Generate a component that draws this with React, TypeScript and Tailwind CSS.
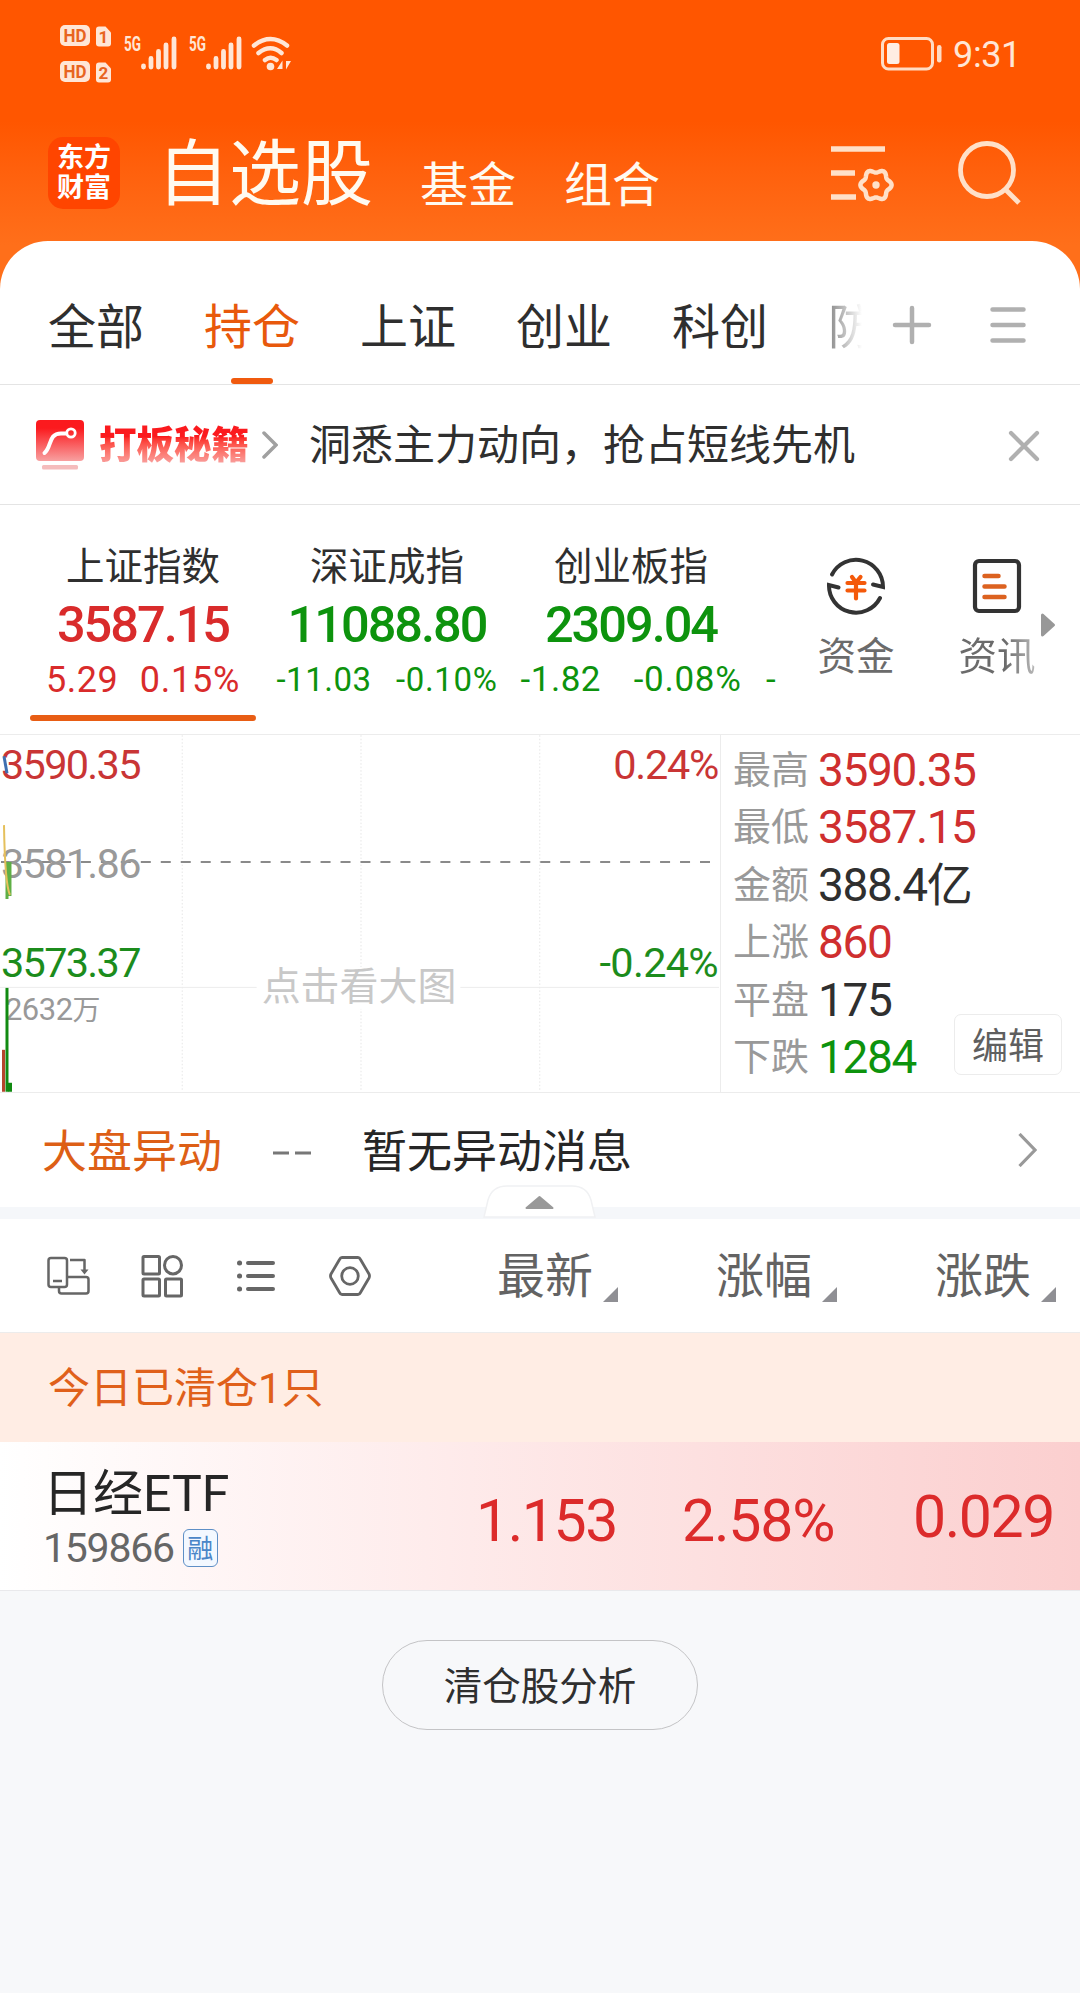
const tabs = ["全部", "持仓", "上证", "创业", "科创", "防"];

const indexes = [
  {
    name: "上证指数",
    price: "3587.15",
    change: "5.29",
    percent: "0.15%",
    color: "text-[#d92b2b]",
    row: "w-[194px] text-[36px]",
    active: true,
  },
  {
    name: "深证成指",
    price: "11088.80",
    change: "-11.03",
    percent: "-0.10%",
    color: "text-[#0d930d]",
    row: "w-[221px] text-[33px]",
    active: false,
  },
  {
    name: "创业板指",
    price: "2309.04",
    change: "-1.82",
    percent: "-0.08%",
    color: "text-[#0d930d]",
    row: "w-[221px] text-[35px]",
    active: false,
  },
];

const stats = [
  { label: "最高", value: "3590.35", color: "text-[#cf2f2f]" },
  { label: "最低", value: "3587.15", color: "text-[#cf2f2f]" },
  { label: "金额", value: "388.4亿", color: "text-[#2f2f2f]" },
  { label: "上涨", value: "860", color: "text-[#cf2f2f]" },
  { label: "平盘", value: "175", color: "text-[#2f2f2f]" },
  { label: "下跌", value: "1284", color: "text-[#0d930d]" },
];

// wavy six-lobed outline used by the settings icon
const gearPath =
  Array.from({ length: 72 }, (_, i) => {
    const t = (i / 72) * Math.PI * 2;
    const r = 14 + 1.6 * Math.cos(6 * t);
    const x = (45 + r * Math.cos(t)).toFixed(2);
    const y = (39 + r * Math.sin(t)).toFixed(2);
    return `${i === 0 ? "M" : "L"}${x} ${y}`;
  }).join(" ") + "Z";

function HdBadge({ sim }: { sim: string }) {
  return (
    <svg width="52" height="22" viewBox="0 0 52 22">
      <rect x="0" y="0" width="30" height="21" rx="5" fill="#ffe6d6" />
      <text x="3.5" y="17" fontSize="18" fontWeight="700" fill="#e8641f" textLength="23" lengthAdjust="spacingAndGlyphs">
        HD
      </text>
      <path d="M39 1.5h6.5l5.5 6v11a3 3 0 0 1-3 3h-9a3 3 0 0 1-3-3v-14a3 3 0 0 1 3-3z" fill="#ffe6d6" />
      <text x="43.5" y="18" fontSize="17" fontWeight="700" fill="#e8641f" textAnchor="middle">
        {sim}
      </text>
    </svg>
  );
}

function Signal() {
  return (
    <svg className="overflow-visible" width="53" height="35" viewBox="0 0 53 35">
      <text x="0" y="15" fontSize="21" fontWeight="700" fill="#ffe6d6" textLength="17" lengthAdjust="spacingAndGlyphs">
        5G
      </text>
      <path d="M19.5 30v1M27 22.500v8.500M34.500 15.500v15.500M42 9v22M50 3v28" stroke="#ffe6d6" strokeWidth="4.800" strokeLinecap="round" />
    </svg>
  );
}

function StatusBar() {
  return (
    <div className="flex h-[106px] items-center pl-[60px] pr-[59px]">
      <div className="flex flex-col gap-[14px] pt-[1px]">
        <HdBadge sim="1" />
        <HdBadge sim="2" />
      </div>
      <div className="ml-[12px] flex gap-[12px]">
        <Signal />
        <Signal />
      </div>
      <svg className="ml-[9px]" width="42" height="35" viewBox="0 0 42 35" fill="none" stroke="#ffe6d6" strokeWidth="4.500" strokeLinecap="round">
        <path d="M3 9.500Q19.500-3.500 36 9.500M7.500 17Q19.500 7.500 30.500 17M14 24Q19.500 19.500 25.500 24" />
        <circle cx="19.500" cy="30.500" r="3.800" fill="#ffe6d6" stroke="none" />
        <path d="M31.500 24.500v8.500h-5.500zM35 33.500v-8.500h5z" fill="#ffe6d6" stroke="none" />
      </svg>
      <svg className="ml-auto mt-[1px]" width="61" height="34" viewBox="0 0 61 34">
        <rect x="1.500" y="1.500" width="50" height="30.500" rx="6" fill="none" stroke="#ffdcc4" strokeWidth="3" />
        <rect x="6" y="6" width="12.500" height="21" rx="2.500" fill="#ffede2" />
        <rect x="56" y="8" width="4.500" height="17.500" rx="2.200" fill="#ffdcc4" />
      </svg>
      <span className="ml-[11px] pt-[4px] text-[36px] leading-none tracking-[-0.01em] text-[#ffe6d6]">9:31</span>
    </div>
  );
}

function Header() {
  return (
    <header className="h-[289px] bg-gradient-to-b from-[#ff5600] from-[42%] to-[#ff6f1a] to-[85%]">
      <StatusBar />
      <div className="flex h-[134px] items-center pl-[48px] pr-[58px] text-[#fffaf0]">
        <div className="flex size-[72px] flex-col items-center justify-center rounded-[15px] bg-[#ff4500] text-[27px] font-bold leading-[30px] text-white">
          <span>东方</span>
          <span>财富</span>
        </div>
        <h1 className="ml-[37px] pt-[3px] text-[72px] leading-none">自选股</h1>
        <span className="ml-[47px] pt-[26px] text-[48px] leading-none">基金</span>
        <span className="ml-[48px] pt-[26px] text-[48px] leading-none">组合</span>
        <svg className="ml-auto mt-[5px]" width="64" height="60" viewBox="0 0 64 60" fill="none" stroke="#ffe0c8">
          <path d="M0 3h54M0 27h24M0 51h25" strokeWidth="5.500" />
          <path d={gearPath} strokeWidth="4.500" strokeLinejoin="round" />
          <circle cx="45" cy="39" r="3.700" fill="#ffe0c8" stroke="none" />
        </svg>
        <svg className="ml-[63px]" width="64" height="64" viewBox="0 0 64 64" fill="none" stroke="#ffe0c8" strokeWidth="4.800">
          <ellipse cx="29" cy="29" rx="26.500" ry="26.500" />
          <path d="M47 48l14 14" strokeWidth="5" />
        </svg>
      </div>
    </header>
  );
}

function Tabs() {
  return (
    <nav className="flex h-[144px] border-b border-[#e4e4e4]">
      <div className="flex w-[868px] gap-[60px] overflow-hidden pl-[48px]">
        {tabs.map((tab) => (
          <div
            key={tab}
            className={
              tab === "持仓"
                ? "flex shrink-0 flex-col items-center pt-[63px] text-[48px] leading-none text-[#e8590c]"
                : tab === "防"
                  ? "w-[34px] shrink-0 overflow-hidden bg-gradient-to-r from-[#888] to-[#fff] bg-clip-text pt-[63px] text-[48px] leading-none text-transparent"
                  : "shrink-0 pt-[63px] text-[48px] leading-none text-[#2f2f2f]"
            }
          >
            {tab}
            {tab === "持仓" && <div className="mt-[26px] h-[6px] w-[42px] rounded-full bg-[#f05a0e]" />}
          </div>
        ))}
      </div>
      <svg className="ml-[24px] mt-[64px]" width="40" height="40" viewBox="0 0 40 40" stroke="#b0b0b0" strokeWidth="4.500" strokeLinecap="round">
        <path d="M3 20h34M20 3v34" />
      </svg>
      <svg className="ml-[56px] mt-[64px]" width="40" height="40" viewBox="0 0 40 40" stroke="#b0b0b0" strokeWidth="4.500" strokeLinecap="round">
        <path d="M4.500 4.500h31M4.500 20h31M4.500 35.500h31" />
      </svg>
    </nav>
  );
}

function Promo() {
  return (
    <div className="flex h-[120px] items-center border-b border-[#e4e4e4] pl-[36px] pr-[40px]">
      <svg width="48" height="50" viewBox="0 0 48 50">
        <defs>
          <linearGradient id="promo" x1="0" y1="0" x2="0" y2="1">
            <stop offset="0.200" stopColor="#fb1a1e" />
            <stop offset="1" stopColor="#f8a0a0" />
          </linearGradient>
        </defs>
        <rect width="48" height="41" rx="4" fill="url(#promo)" />
        <path d="M8.500 33C16 27 12 13.500 25 13.500h5" fill="none" stroke="#fff" strokeWidth="4" strokeLinecap="round" />
        <circle cx="35" cy="13" r="4.200" fill="none" stroke="#fff" strokeWidth="2.800" />
        <rect x="6" y="45" width="36" height="4.500" rx="1.500" fill="#f5bcbc" />
      </svg>
      <span className="ml-[15px] bg-gradient-to-b from-[#fb1a1e] from-30% to-[#f7a8a8] bg-clip-text text-[37.500px] font-black leading-[42px] text-transparent">
        打板秘籍
      </span>
      <svg className="ml-[13px]" width="16" height="28" viewBox="0 0 16 28" fill="none" stroke="#a0a0a0" strokeWidth="3.500" strokeLinecap="round">
        <path d="M2 2l12 12L2 26" />
      </svg>
      <span className="ml-[31px] pt-[3px] text-[42px] leading-none text-[#2f2f2f]">洞悉主力动向，抢占短线先机</span>
      <svg className="ml-auto mt-[2px]" width="32" height="32" viewBox="0 0 32 32" stroke="#b0b0b0" strokeWidth="4.200" strokeLinecap="round">
        <path d="M3 3l26 26M29 3l-26 26" />
      </svg>
    </div>
  );
}

function Indexes() {
  return (
    <section className="flex h-[229px]">
      <div className="flex w-[790px] overflow-hidden pl-[21px]">
        {indexes.map((item) => (
          <div key={item.name} className="flex w-[244px] shrink-0 flex-col items-center pt-[42px]">
            <div className="text-[38.500px] leading-[40px] text-[#2f2f2f]">{item.name}</div>
            <div className={`mt-[13px] text-[50.500px] font-medium leading-[50px] tracking-[-0.04em] ${item.color}`}>
              {item.price}
            </div>
            <div className={`mt-[10px] flex justify-between leading-[40px] ${item.color} ${item.row}`}>
              <span className="tracking-[0.015em]">{item.change}</span>
              <span className="tracking-[0.02em]">{item.percent}</span>
            </div>
            {item.active && <div className="mt-[15px] h-[6px] w-[226px] rounded-full bg-[#e85d14]" />}
          </div>
        ))}
        <div className="shrink-0 pl-[13px] pt-[155px] text-[35px] leading-[40px] text-[#0d930d]">-</div>
      </div>
      <div className="flex w-[132px] flex-col items-center pt-[51px]">
        <svg width="60" height="60" viewBox="0 0 60 60" fill="none" stroke="#333" strokeWidth="4" strokeLinecap="round">
          <path d="M6 18.500A27 27 0 0 1 57 31L47 28.500" />
          <path d="M54 42A27 27 0 0 1 3 29L12.500 31.500" />
          <path d="M26 21l4 5.500 4.500-5.500M21.500 27h17M21.500 34.500h17M30 27v15.500" stroke="#f4590a" strokeWidth="4.200" />
        </svg>
        <span className="mt-[21px] text-[38.500px] leading-[40px] text-[#6b6b6b]">资金</span>
      </div>
      <div className="flex w-[150px] flex-col items-center pt-[51px]">
        <svg width="60" height="60" viewBox="0 0 60 60" fill="none">
          <rect x="8" y="5" width="44" height="50" rx="4" stroke="#333" strokeWidth="4.200" />
          <path d="M17.500 20h14M17.500 30.500h20M17.500 41h20" stroke="#dc6220" strokeWidth="4.500" strokeLinecap="round" />
        </svg>
        <span className="mt-[21px] bg-gradient-to-r from-[#6b6b6b] from-60% to-[#bbb] bg-clip-text text-[38.500px] leading-[40px] text-transparent">
          资讯
        </span>
      </div>
      <svg className="-ml-[32px] mt-[107px]" width="16" height="26" viewBox="0 0 16 26">
        <path d="M2.500 3l11 10-11 10z" fill="#989898" stroke="#989898" strokeWidth="3" strokeLinejoin="round" />
      </svg>
    </section>
  );
}

function MinuteChart() {
  return (
    <svg width="721" height="358" viewBox="0 0 721 358" className="shrink-0 border-r border-[#ececec]">
      <g stroke="#e6e6e6" strokeDasharray="1.500 2">
        <path d="M182.500 0v357M361.500 0v357M540.500 0v357" />
      </g>
      <path d="M0 252.500h720" stroke="#ececec" />
      <path d="M0 127h714" stroke="#8a8a8a" strokeWidth="2" strokeDasharray="10 10" strokeDashoffset="-1" />
      <rect x="257" y="232" width="204" height="42" fill="#fff" />
      <g fontSize="41.500" letterSpacing="-1.700">
        <text x="1" y="43.500" fill="#c93535">3590.35</text>
        <text x="1" y="142.500" fill="#999">3581.86</text>
        <text x="1" y="242.500" fill="#1c8c1c">3573.37</text>
      </g>
      <g fontSize="41.500" letterSpacing="-1.300" textAnchor="end">
        <text x="719" y="43.500" fill="#c93535">0.24%</text>
        <text x="719" y="242.500" fill="#1c8c1c" letterSpacing="-0.700">-0.24%</text>
      </g>
      <text x="5" y="285" fontSize="31" fill="#999" letterSpacing="-0.500">
        2632<tspan fontSize="28">万</tspan>
      </text>
      <text x="262" y="265.500" fontSize="39" fill="#c8c8c8">点击看大图</text>
      <path d="M4 21l3 17" stroke="#3f6fb0" strokeWidth="3" />
      <path d="M7 127v37M10 127v34" stroke="#5faf45" strokeWidth="3" />
      <path d="M4 90q1 60 6 70" fill="none" stroke="#e5c05c" strokeWidth="2" />
      <path d="M3.500 315v42" stroke="#b5452c" strokeWidth="3" />
      <path d="M7 253v104" stroke="#118a11" strokeWidth="3" />
      <path d="M10 348v9" stroke="#118a11" strokeWidth="4" />
    </svg>
  );
}

function Market() {
  return (
    <section className="flex h-[359px] border-y border-[#ececec]">
      <MinuteChart />
      <div className="relative flex-1 pl-[12px] pt-[6px]">
        {stats.map((stat) => (
          <div key={stat.label} className="flex h-[57.500px] items-center leading-none">
            <span className="w-[85px] text-[38px] text-[#999]">{stat.label}</span>
            <span className={`text-[46px] tracking-[-0.03em] ${stat.color}`}>{stat.value}</span>
          </div>
        ))}
        <button className="absolute bottom-[17px] right-[18px] h-[61px] w-[108px] rounded-[7px] border border-[#ececec] bg-white pt-[4px] text-[36px] text-[#5f5f5f]">
          编辑
        </button>
      </div>
    </section>
  );
}

function News() {
  return (
    <section className="relative flex h-[126px] items-center border-b-[12px] border-[#f5f7fa] pl-[42px] pr-[43px] leading-none">
      <span className="pt-[5px] text-[45px] text-[#dd5f16]">大盘异动</span>
      <svg className="ml-[51px] mt-[6px]" width="38" height="4" viewBox="0 0 38 4" stroke="#777" strokeWidth="3">
        <path d="M0 2h16M22 2h16" />
      </svg>
      <span className="ml-[51px] pt-[5px] text-[45px] text-[#262626]">暂无异动消息</span>
      <svg className="ml-auto" width="19" height="34" viewBox="0 0 19 34" fill="none" stroke="#999" strokeWidth="3.200">
        <path d="M1.500 1l15.500 16-15.500 16" />
      </svg>
      <svg className="absolute left-[483px] top-[92px]" width="113" height="33" viewBox="0 0 113 33">
        <path d="M1 32L5 15Q9 1 24 1H89Q104 1 108 15L112 32Z" fill="#fff" stroke="#f0f1f3" strokeWidth="1.500" />
        <path d="M56.500 12l13 11h-26z" fill="#999" stroke="#999" strokeWidth="2" strokeLinejoin="round" />
      </svg>
    </section>
  );
}

function SortHeader({ label }: { label: string }) {
  return (
    <div className="flex w-[219px] shrink-0 text-[48px] leading-none text-[#636363]">
      <span className="pt-[3px]">{label}</span>
      <svg className="ml-[10px] mt-[37px]" width="15" height="15" viewBox="0 0 15 15">
        <path d="M15 0v15H0z" fill="#8f8f94" />
      </svg>
    </div>
  );
}

function Toolbar() {
  return (
    <div className="flex h-[114px] items-center overflow-hidden border-b border-[#ececec] pl-[46px]">
      <svg className="shrink-0" width="44" height="44" viewBox="0 0 44 44" fill="none" stroke="#666" strokeWidth="2.500" strokeLinejoin="round">
        <rect x="2.500" y="4" width="18.500" height="29" rx="2.500" />
        <path d="M7 27h9M24 6h14.500v12M21 23h19q2.500 0 2.500 2.500V37q0 2.500-2.500 2.500H15.500q-2.500 0-2.500-2.500v-4" />
        <path d="M34.500 15.500h8l-4 5z" fill="#666" stroke="none" />
      </svg>
      <svg className="ml-[50px] shrink-0" width="44" height="44" viewBox="0 0 44 44" fill="none" stroke="#666" strokeWidth="3">
        <rect x="3" y="2.500" width="16.500" height="17.500" rx="1" />
        <ellipse cx="33" cy="11.200" rx="8.500" ry="8.700" />
        <rect x="3" y="25" width="16.500" height="17" rx="1" />
        <rect x="25.500" y="25" width="16" height="17" rx="1" />
      </svg>
      <svg className="ml-[51px] shrink-0" width="44" height="44" viewBox="0 0 44 44" stroke="#666" strokeWidth="4" strokeLinecap="round">
        <path d="M13 9h25M13 22h25M13 35h25" />
        <path d="M4.500 9h.1M4.500 22h.1M4.500 35h.1" strokeWidth="5" />
      </svg>
      <svg className="ml-[49px] shrink-0" width="44" height="44" viewBox="0 0 44 44" fill="none" stroke="#666" strokeWidth="2.800">
        <path d="M14 3.500h16q1.500 0 2.500 2L41 20q1 2 0 4l-8.500 14.500q-1 2-2.500 2H14q-1.500 0-2.500-2L3 24q-1-2 0-4l8.500-14.500q1-2 2.500-2z" />
        <circle cx="22" cy="22" r="8.300" />
      </svg>
      <div className="ml-[125px] flex shrink-0">
        <SortHeader label="最新" />
        <SortHeader label="涨幅" />
        <SortHeader label="涨跌" />
      </div>
    </div>
  );
}

function Holding() {
  return (
    <div className="flex h-[149px] border-b border-[#e9e9ec] bg-gradient-to-r from-white to-[#fbcfcf]">
      <div className="w-[476px] pl-[43px] pt-[26px]">
        <div className="text-[50px] leading-[52px] text-[#262626]">日经ETF</div>
        <div className="mt-[7px] flex items-center">
          <span className="text-[41px] leading-[42px] tracking-[-0.03em] text-[#666]">159866</span>
          <span className="ml-[9px] flex h-[38px] w-[35px] items-center justify-center rounded-[6px] border-[1.500px] border-[#5e8fc6] bg-[#f3f8ff] pt-[1px] text-[26px] leading-none text-[#4a86c8]">
            融
          </span>
        </div>
      </div>
      <div className="flex text-[59px] leading-[60px] tracking-[-0.025em] text-[#dc2b2b]">
        <span className="w-[206px] pt-[49px]">1.153</span>
        <span className="w-[231px] pt-[49px] tracking-[-0.02em]">2.58%</span>
        <span className="pt-[45px]">0.029</span>
      </div>
    </div>
  );
}

export default function App() {
  return (
    <div className="h-[1993px] w-[1080px] overflow-hidden bg-[#f7f8fa] font-[Roboto,'Noto_Sans_CJK_SC',sans-serif] whitespace-nowrap">
      <Header />
      <main className="relative -mt-[48px] rounded-t-[48px] bg-white">
        <Tabs />
        <Promo />
        <Indexes />
        <Market />
        <News />
        <Toolbar />
        <div className="h-[109px] bg-[#ffede4] pl-[48px] text-[42px] leading-[112px] text-[#e0601a]">今日已清仓1只</div>
        <Holding />
      </main>
      <div className="flex justify-center pt-[49px]">
        <button className="h-[90px] w-[316px] rounded-full border border-[#c4c4c6] pt-[4px] text-[38.500px] text-[#2f2f2f]">
          清仓股分析
        </button>
      </div>
    </div>
  );
}
